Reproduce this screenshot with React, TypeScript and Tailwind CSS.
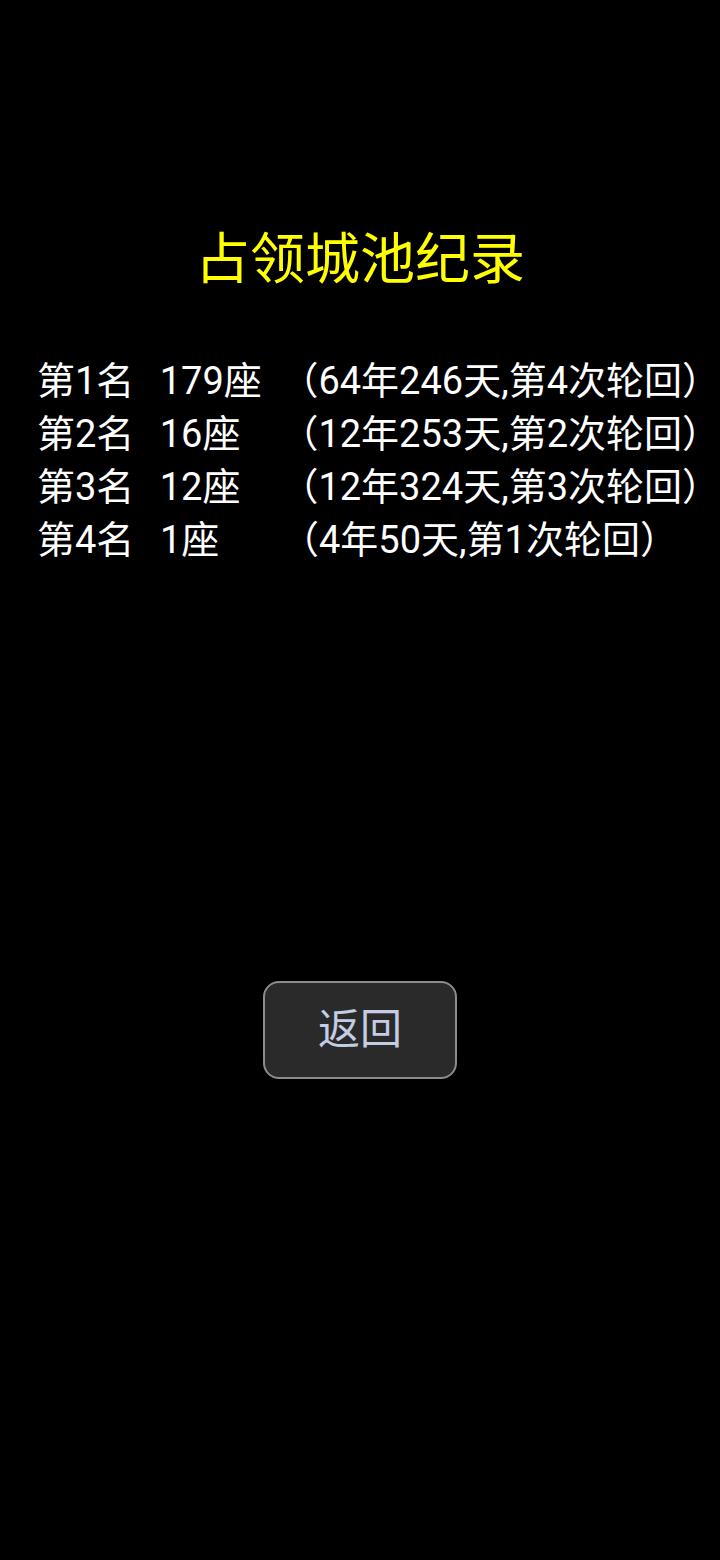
import React from "react";

const rows = [
  ["第1名", "179座", "（64年246天,第4次轮回）"],
  ["第2名", "16座", "（12年253天,第2次轮回）"],
  ["第3名", "12座", "（12年324天,第3次轮回）"],
  ["第4名", "1座", "（4年50天,第1次轮回）"],
];

export default function App() {
  return (
    <div
      className="w-[720px] h-[1560px] bg-black flex flex-col items-center"
      style={{ fontFamily: 'Roboto, "Noto Sans CJK SC", sans-serif' }}
    >
      <div className="pt-[232px] h-[287px] text-[55px] leading-[55px] text-[#ffff00]">
        占领城池纪录
      </div>
      <div className="mt-[68px] w-full pl-[37px] flex flex-col text-white text-[38px] leading-[53px]">
        {rows.map((r, i) => (
          <div key={i} className="flex whitespace-nowrap">
            <div className="w-[123px]">{r[0]}</div>
            <div className="w-[121px]">{r[1]}</div>
            <div>{r[2]}</div>
          </div>
        ))}
      </div>
      <button className="mt-[414px] w-[194px] h-[98px] rounded-[16px] bg-[#2a2a2a] border-2 border-[#8c8c8c] text-[#c3cde4] text-[42px] leading-none flex items-center justify-center">
        返回
      </button>
    </div>
  );
}
